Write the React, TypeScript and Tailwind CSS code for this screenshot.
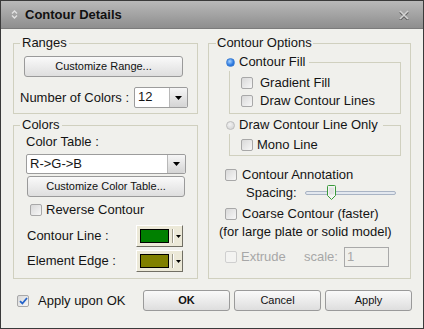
import React from 'react';

function Check({ checked = false, disabled = false, className = '' }: { checked?: boolean; disabled?: boolean; className?: string }) {
  return (
    <span
      className={`inline-flex shrink-0 items-center justify-center w-[12px] h-[12px] rounded-[2px] border ${
        disabled ? 'border-[#cfcfcf] bg-[#f3f3f1]' : 'border-[#a8a8a8] bg-linear-to-br from-[#d9d9d9] to-[#f7f7f7]'
      } ${className}`}
    >
      {checked && (
        <svg width="9" height="8" viewBox="0 0 9 8">
          <path d="M1 4.2L3.4 6.5L8 1" fill="none" stroke="#2463c9" strokeWidth="1.8" />
        </svg>
      )}
    </span>
  );
}

function Radio({ on = false }: { on?: boolean }) {
  return (
    <span
      className={`inline-block shrink-0 w-[9px] h-[9px] rounded-full border ${
        on
          ? 'border-[#3d7fd4] bg-[radial-gradient(circle_at_40%_35%,#a9d4ff,#2a78e0_60%,#1b5fc4)]'
          : 'border-[#bdbdbd] bg-[radial-gradient(circle_at_40%_35%,#f2f2f2,#cfcfcf)]'
      }`}
    />
  );
}

function Btn({ children, className = '' }: { children: React.ReactNode; className?: string }) {
  return (
    <div
      className={`flex items-center justify-center h-[21px] rounded-[3px] border border-[#9a9a9a] bg-linear-to-b from-[#fafafa] to-[#dedede] text-[11px] text-[#111] ${className}`}
    >
      {children}
    </div>
  );
}

function Select({ value, className = '' }: { value: string; className?: string }) {
  return (
    <div className={`flex h-[20px] rounded-[2px] border border-[#9c9c9c] bg-white ${className}`}>
      <span className="flex-1 pl-[3px] leading-[18px] text-[13px]">{value}</span>
      <span className="flex w-[18px] items-center justify-center rounded-r-[2px] border-l border-[#b8b8b8] bg-linear-to-b from-[#f6f6f6] to-[#d4d4d4]">
        <svg width="7" height="4" viewBox="0 0 7 4">
          <path d="M0 0H7L3.5 4Z" fill="#000" />
        </svg>
      </span>
    </div>
  );
}

function ColorBtn({ swatch }: { swatch: string }) {
  return (
    <div className="flex h-[22px] w-[47px] border border-t-white border-l-white border-r-[#716f64] border-b-[#716f64] bg-[#ece9d8] py-[3px] pl-[3px]">
      <span className={`w-[29px] h-full border border-black ${swatch}`} />
      <span className="ml-[3px] w-px h-full bg-[#9d9a8a]" />
      <span className="w-px h-full bg-white" />
      <span className="flex flex-1 items-center justify-center">
        <svg width="5" height="3" viewBox="0 0 5 3">
          <path d="M0 0H5L2.5 3Z" fill="#000" />
        </svg>
      </span>
    </div>
  );
}

function App() {
  return (
    <div className="w-[424px] h-[329px] flex flex-col border border-[#3a3a3a] font-['Liberation_Sans',Arial,sans-serif] text-[13px] text-[#141414]">
      {/* title bar */}
      <div className="h-[28px] flex items-center bg-linear-to-b from-[#b9b9b9] to-[#8e8e8e] border-b border-[#7b7b7b]">
        <svg className="ml-[10px]" width="7" height="9" viewBox="0 0 7 9">
          <path d="M1 3.5L3.5 1L6 3.5M1 5.5L3.5 8L6 5.5" fill="none" stroke="#e2e2e2" strokeWidth="1.4" />
        </svg>
        <span className="ml-[7px] text-[13px] font-bold text-[#111]">Contour Details</span>
        <svg className="ml-auto mr-[14px]" width="10" height="10" viewBox="0 0 10 10">
          <path d="M1 1L9 9M9 1L1 9" stroke="#5e5e5e" strokeWidth="2" transform="translate(0 1)" />
          <path d="M1 1L9 9M9 1L1 9" stroke="#d4d4d4" strokeWidth="1.6" />
        </svg>
      </div>

      <div className="flex-1 flex flex-col bg-[#f0f0ec] pl-[12px] pr-[11px] pt-[6px]">
        <div className="flex gap-[10px]">
          {/* left column */}
          <div className="w-[185px] flex flex-col gap-[3px]">
            <fieldset className="h-[79px] border border-[#d0d0bf] pl-[6px]">
              <legend className="px-[2px] leading-[16px]">Ranges</legend>
              <Btn className="mt-[5px] ml-[4px] w-[159px]">Customize Range...</Btn>
              <div className="flex items-center mt-[10px] h-[21px]">
                <span className="w-[114px]">Number of Colors :</span>
                <Select value="12" className="w-[54px] h-[21px]" />
              </div>
            </fieldset>

            <fieldset className="h-[162px] border border-[#d0d0bf] pl-[6px]">
              <legend className="px-[2px] leading-[16px]">Colors</legend>
              <div className="mt-[1px] ml-[6px] h-[16px] leading-[16px]">Color Table :</div>
              <Select value="R->G->B" className="mt-[4px] ml-[6px] w-[160px]" />
              <Btn className="mt-[2px] ml-[7px] w-[158px]">Customize Color Table...</Btn>
              <div className="mt-[5px] h-[16px] flex items-center">
                <Check className="ml-[10px]" />
                <span className="ml-[4px]">Reverse Contour</span>
              </div>
              <div className="mt-[7px] flex items-center">
                <span className="ml-[7px] w-[109px]">Contour Line :</span>
                <ColorBtn swatch="bg-[#008000]" />
              </div>
              <div className="mt-[3px] flex items-center">
                <span className="ml-[7px] w-[109px]">Element Edge :</span>
                <ColorBtn swatch="bg-[#808000]" />
              </div>
            </fieldset>
          </div>

          {/* right column */}
          <fieldset className="w-[203px] h-[244px] border border-[#d0d0bf] pl-[7px]">
            <legend className="px-[1px] leading-[16px]">Contour Options</legend>

            <fieldset className="mt-[3px] ml-[13px] w-[172px] h-[60px] border border-[#d0d0bf] pt-[3px]">
              <legend className="-ml-[4px] pr-[4px] leading-[16px]">
                <span className="inline-flex items-center gap-[4px]">
                  <Radio on />
                  <span>Contour Fill</span>
                </span>
              </legend>
              <div className="h-[18px] flex items-center">
                <Check className="ml-[11px]" />
                <span className="ml-[7px]">Gradient Fill</span>
              </div>
              <div className="h-[18px] flex items-center">
                <Check className="ml-[11px]" />
                <span className="ml-[7px]">Draw Contour Lines</span>
              </div>
            </fieldset>

            <fieldset className="mt-[3px] ml-[13px] w-[172px] h-[39px] border border-[#d0d0bf] pt-[2px]">
              <legend className="-ml-[4px] pr-[5px] leading-[16px]">
                <span className="inline-flex items-center gap-[4px]">
                  <Radio />
                  <span>Draw Contour Line Only</span>
                </span>
              </legend>
              <div className="h-[18px] flex items-center">
                <Check className="ml-[11px]" />
                <span className="ml-[4px]">Mono Line</span>
              </div>
            </fieldset>

            <div className="mt-[10px] h-[18px] flex items-center">
              <Check className="ml-[9px]" />
              <span className="ml-[5px]">Contour Annotation</span>
            </div>
            <div className="h-[18px] flex items-center">
              <span className="ml-[30px] w-[59px]">Spacing:</span>
              <div className="relative w-[91px] h-[4px] rounded-[2px] border border-[#a9b4c4] bg-[#e3e8ef]">
                <svg className="absolute left-[21px] -top-[7px]" width="9" height="15" viewBox="0 0 9 15">
                  <path d="M0.5 1.5Q0.5 0.5 1.5 0.5H7.5Q8.5 0.5 8.5 1.5V10.5L4.5 14.5L0.5 10.5Z" fill="#f4f4f4" stroke="#3a9a3a" />
                  <path d="M2 2.5H7V9.5H2Z" fill="#e2e2e2" />
                </svg>
              </div>
            </div>
            <div className="mt-[3px] h-[18px] flex items-center">
              <Check className="ml-[9px]" />
              <span className="ml-[5px]">Coarse Contour (faster)</span>
            </div>
            <div className="h-[18px] flex items-center">
              <span className="ml-[3px]">(for large plate or solid model)</span>
            </div>
            <div className="mt-[6px] h-[20px] flex items-center text-[#a7a7a7]">
              <Check disabled className="ml-[9px]" />
              <span className="ml-[4px] w-[63px]">Extrude</span>
              <span className="w-[40px]">scale:</span>
              <span className="w-[45px] h-[20px] border border-[#a9a9a9] bg-[#f0f0ec] pl-[2px] leading-[18px]">1</span>
            </div>
          </fieldset>
        </div>

        {/* bottom row */}
        <div className="mt-[11px] flex items-center h-[21px]">
          <Check checked className="ml-[4px]" />
          <span className="ml-[9px]">Apply upon OK</span>
          <div className="ml-auto flex gap-[4px]">
            <Btn className="w-[87px] font-bold">OK</Btn>
            <Btn className="w-[87px]">Cancel</Btn>
            <Btn className="w-[87px]">Apply</Btn>
          </div>
        </div>
      </div>
    </div>
  );
}

export default App;
